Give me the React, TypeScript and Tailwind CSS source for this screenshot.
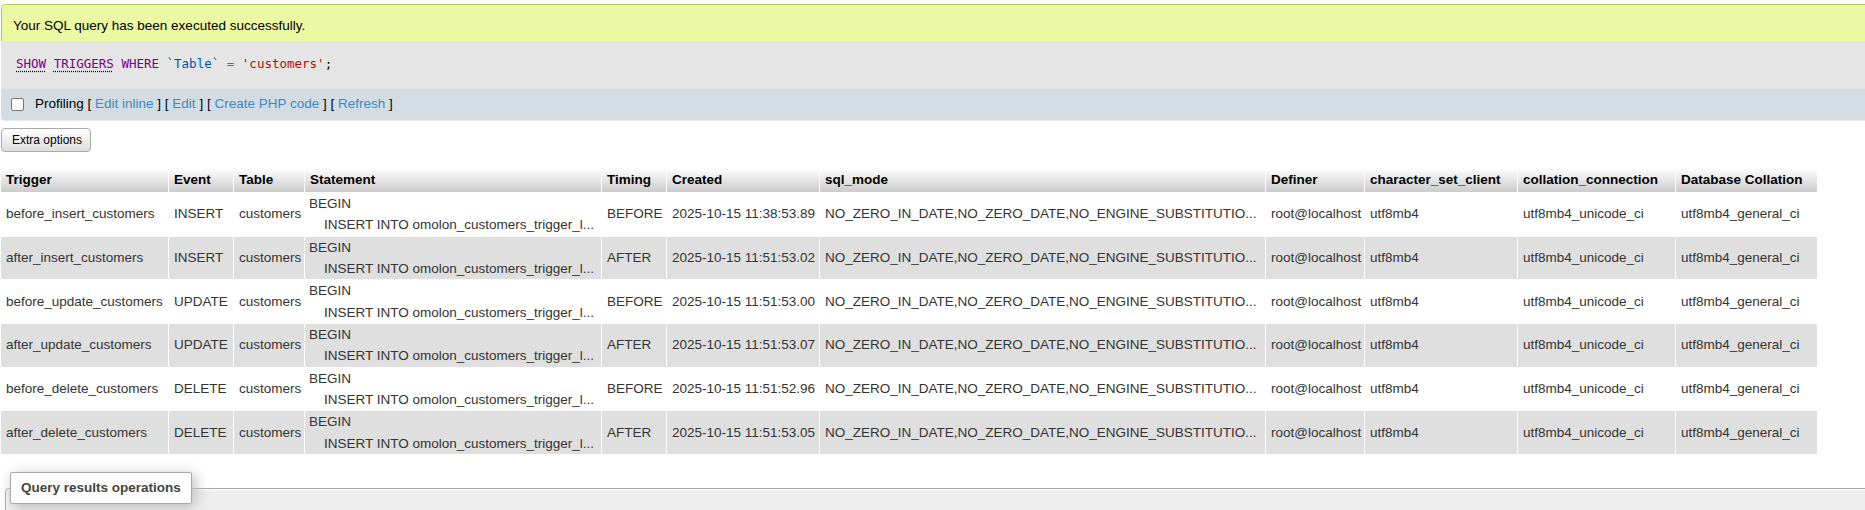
import React from 'react';

const cols = [
  { label: 'Trigger', w: 'w-[167px]' },
  { label: 'Event', w: 'w-[64px]' },
  { label: 'Table', w: 'w-[70px]' },
  { label: 'Statement', w: 'w-[296px]' },
  { label: 'Timing', w: 'w-[64px]' },
  { label: 'Created', w: 'w-[152px]' },
  { label: 'sql_mode', w: 'w-[445px]' },
  { label: 'Definer', w: 'w-[98px]' },
  { label: 'character_set_client', w: 'w-[152px]' },
  { label: 'collation_connection', w: 'w-[157px]' },
  { label: 'Database Collation', w: 'w-[141px]' },
];

const triggers = [
  { name: 'before_insert_customers', event: 'INSERT', timing: 'BEFORE', created: '2025-10-15 11:38:53.89' },
  { name: 'after_insert_customers', event: 'INSERT', timing: 'AFTER', created: '2025-10-15 11:51:53.02' },
  { name: 'before_update_customers', event: 'UPDATE', timing: 'BEFORE', created: '2025-10-15 11:51:53.00' },
  { name: 'after_update_customers', event: 'UPDATE', timing: 'AFTER', created: '2025-10-15 11:51:53.07' },
  { name: 'before_delete_customers', event: 'DELETE', timing: 'BEFORE', created: '2025-10-15 11:51:52.96' },
  { name: 'after_delete_customers', event: 'DELETE', timing: 'AFTER', created: '2025-10-15 11:51:53.05' },
];

const cell = 'px-[5px] align-middle whitespace-nowrap';

export default function App() {
  return (
    <div className="h-[510px] w-[1865px] overflow-hidden bg-white pt-[4px] font-['Liberation_Sans',Arial,sans-serif] text-[13.5px] text-[#333]">
      {/* Mensaje + consulta */}
      <div className="ml-[1px] mr-[-10px]">
        <div className="flex h-[37px] items-start rounded-tl-[5px] border-l border-t border-[#a2d246] bg-[#ebf8a4] pl-[11px] pt-[11px] text-black shadow-[inset_0_1px_0_#fff]">
          Your SQL query has been executed successfully.
        </div>
        <div className="flex h-[48px] items-center bg-[#e5e5e5] pb-[2px] pl-[15px] font-['DejaVu_Sans_Mono',monospace] text-[12.5px]">
          <span className="text-[#770088] underline decoration-dotted decoration-black underline-offset-[3px]">SHOW</span>
          <span>&nbsp;</span>
          <span className="text-[#770088] underline decoration-dotted decoration-black underline-offset-[3px]">TRIGGERS</span>
          <span className="text-[#770088]">&nbsp;WHERE&nbsp;</span>
          <span className="text-[#0055aa]">`Table`</span>
          <span>&nbsp;</span>
          <span className="text-[#ff00ff]">=</span>
          <span>&nbsp;</span>
          <span className="text-[#aa1111]">'customers'</span>
          <span className="text-black">;</span>
        </div>
        <div className="flex h-[32px] items-center rounded-bl-[4px] border-b border-[#e9ecef] bg-[#d3dce3] pl-[10px] text-black">
          <span className="mr-[11px] inline-block h-[13px] w-[13px] rounded-[2px] border border-[#767676] bg-white" />
          <span>Profiling</span>
          <span className="whitespace-pre">
            {' [ '}<a className="text-[#3f87c0]">Edit inline</a>{' ] [ '}<a className="text-[#3f87c0]">Edit</a>{' ] [ '}
            <a className="text-[#3f87c0]">Create PHP code</a>{' ] [ '}<a className="text-[#3f87c0]">Refresh</a>{' ]'}
          </span>
        </div>
      </div>

      <button className="ml-[1px] mt-[7px] flex h-[24px] w-[90px] items-center rounded-[4px] border border-[#aaa] bg-linear-to-b from-white to-[#ddd] pl-[10px] text-[12px] text-black">
        Extra options
      </button>

      {/* Tabla de triggers */}
      <table className="mt-[15px] w-[1818px] table-fixed border-separate border-spacing-[1px]">
        <thead>
          <tr>
            {cols.map((c) => (
              <th
                key={c.label}
                className={`${c.w} h-[24px] bg-linear-to-b from-white to-[#ccc] px-[5px] text-left align-middle font-bold whitespace-nowrap text-black`}
              >
                {c.label}
              </th>
            ))}
          </tr>
        </thead>
        <tbody>
          {triggers.map((t, i) => (
            <tr key={t.name} className={i % 2 === 0 ? 'bg-white' : 'bg-[#dfdfdf]'}>
              <td className={cell}>{t.name}</td>
              <td className={cell}>{t.event}</td>
              <td className={cell}>customers</td>
              <td className="px-[4px] align-top">
                <div className="whitespace-pre leading-[21.35px]">{'BEGIN\n    INSERT INTO omolon_customers_trigger_l...'}</div>
              </td>
              <td className={cell}>{t.timing}</td>
              <td className={cell}>{t.created}</td>
              <td className={cell}>NO_ZERO_IN_DATE,NO_ZERO_DATE,NO_ENGINE_SUBSTITUTIO...</td>
              <td className={cell}>root@localhost</td>
              <td className={cell}>utf8mb4</td>
              <td className={cell}>utf8mb4_unicode_ci</td>
              <td className={cell}>utf8mb4_general_ci</td>
            </tr>
          ))}
        </tbody>
      </table>

      {/* Operaciones */}
      <fieldset className="ml-[5px] mr-[-10px] mt-[17px] h-[80px] rounded-t-[4px] border border-[#aaa] bg-[#eee] px-[4px] shadow-[inset_1px_1px_2px_#fff]">
        <legend className="rounded-[2px] border border-[#aaa] bg-white px-[10px] py-[5px] font-bold leading-[20px] text-[#444] shadow-[3px_3px_15px_#bbb]">
          Query results operations
        </legend>
      </fieldset>
    </div>
  );
}
